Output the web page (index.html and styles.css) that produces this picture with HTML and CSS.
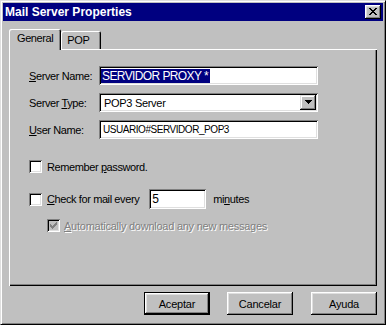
FILE: index.html
```html
<!DOCTYPE html>
<html lang="es">

<head>
    <meta charset="UTF-8">
    <title>Mail Server Properties</title>
    <link rel="stylesheet" href="styles.css">
</head>

<body>
    <div class="window">
        <div class="titlebar">
            <span class="title">Mail Server Properties</span>
            <div class="close">
                <svg width="8" height="7" viewBox="0 0 8 7">
                    <path d="M0 0h2v1h1v1h2v-1h1v-1h2v1h-1v1h-1v1h-1v1h1v1h1v1h1v1h-2v-1h-1v-1h-2v1h-1v1h-2v-1h1v-1h1v-1h1v-1h-1v-1h-1v-1h-1z" fill="#000"/>
                </svg>
            </div>
        </div>

        <div class="content">
            <div class="tabs">
                <div class="tab active">General</div>
                <div class="tab">POP</div>
            </div>

            <div class="panel">
                <div class="field-row">
                    <label><u>S</u>erver Name:</label>
                    <div class="textbox large"><span class="selected">SERVIDOR PROXY *</span></div>
                </div>
                <div class="field-row">
                    <label>Server <u>T</u>ype:</label>
                    <div class="textbox combo">
                        <span>POP3 Server</span>
                        <div class="arrow">
                            <svg width="7" height="4" viewBox="0 0 7 4"><path d="M0 0h7v1h-1v1h-1v1h-1v1h-1v-1h-1v-1h-1v-1h-1z" fill="#000"/></svg>
                        </div>
                    </div>
                </div>
                <div class="field-row">
                    <label><u>U</u>ser Name:</label>
                    <div class="textbox small">USUARIO#SERVIDOR_POP3</div>
                </div>

                <div class="check-row remember">
                    <span class="checkbox"></span>
                    <span>Remember <u>p</u>assword.</span>
                </div>
                <div class="check-row every">
                    <span class="checkbox"></span>
                    <span><u>C</u>heck for mail every</span>
                    <div class="textbox minutes">5</div>
                    <span class="unit">mi<u>n</u>utes</span>
                </div>
                <div class="check-row auto disabled">
                    <span class="checkbox checked">
                        <svg width="7" height="7" viewBox="0 0 7 7"><path d="M6 0h1v3h-1v1h-1v1h-1v1h-1v1h-1v-1h-1v-1h-1v-3h1v1h1v1h1v-1h1v-1h1v-1h1z" fill="#808080"/></svg>
                    </span>
                    <span class="label"><u>A</u>utomatically download any new messages</span>
                </div>
            </div>

            <div class="buttons">
                <button class="default">Aceptar</button>
                <button>Cancelar</button>
                <button>Ayuda</button>
            </div>
        </div>
    </div>
</body>

</html>
```

FILE: styles.css
```css
body {
    margin: 0;
    font-family: 'Liberation Sans', Arial, sans-serif;
    font-size: 11px;
    letter-spacing: -0.4px;
    color: #000;
    background: #c0c0c0;
}

.window {
    width: 386px;
    height: 325px;
    box-sizing: border-box;
    background: #c0c0c0;
    border: 1px solid;
    border-color: #dfdfdf #000 #000 #dfdfdf;
    box-shadow: inset 1px 1px #fff, inset -1px -1px #808080;
    padding: 2px;
}

.titlebar {
    height: 18px;
    background: #000080;
    display: flex;
    align-items: center;
    justify-content: space-between;
    padding: 0 2px 0 2px;

    .title {
        color: #fff;
        font-weight: bold;
        font-size: 12px;
        letter-spacing: 0;
    }
}

.close {
    width: 16px;
    height: 14px;
    box-sizing: border-box;
    background: #c0c0c0;
    box-shadow: inset -1px -1px #000, inset 1px 1px #fff, inset -2px -2px #808080, inset 2px 2px #dfdfdf;
    display: flex;
    justify-content: center;
    align-items: center;
    padding: 0 1px 1px 0;
}

.content {
    padding: 8px 6px 0 6px;
}

.tabs {
    display: flex;
    align-items: flex-end;
    height: 20px;
    position: relative;
    z-index: 1;
}

.tab {
    height: 18px;
    box-sizing: border-box;
    padding: 0 12px 0 6px;
    display: flex;
    align-items: center;
    border-radius: 2px 2px 0 0;
    box-shadow: inset 1px 1px #fff, inset -1px 0 #000, inset -2px 0 #808080;
    background: #c0c0c0;

    &.active {
        height: 21px;
        margin-bottom: -1px;
        padding: 0 8px 3px 8px;
    }
}

.panel {
    height: 237px;
    box-sizing: border-box;
    box-shadow: inset 1px 1px #fff, inset -1px -1px #000, inset -2px -2px #808080;
    padding: 17px 0 0 20px;
}

.field-row {
    display: flex;
    align-items: center;
    height: 19px;
    margin-bottom: 8px;

    label {
        width: 70px;
    }
}

.textbox {
    box-sizing: border-box;
    height: 19px;
    background: #fff;
    box-shadow: inset 1px 1px #808080, inset -1px -1px #fff, inset 2px 2px #000, inset -2px -2px #dfdfdf;
    display: flex;
    align-items: center;
    padding: 0 3px;
    width: 219px;
    letter-spacing: 0;

    &.large {
        font-size: 12px;
        letter-spacing: -0.6px;
        padding-left: 2px;
    }

    &.small {
        font-size: 10px;
        letter-spacing: -0.45px;
        padding-left: 4px;
    }

    &.combo {
        font-size: 11px;
        letter-spacing: -0.3px;
        justify-content: space-between;
        padding: 2px 2px 2px 5px;
    }

    &.minutes {
        width: 57px;
        height: 20px;
        font-size: 12px;
        margin-left: 10px;
    }
}

.selected {
    background: #000080;
    color: #fff;
    line-height: 14px;
    padding: 0 2px 0 1px;
}

.arrow {
    width: 16px;
    height: 15px;
    box-sizing: border-box;
    background: #c0c0c0;
    box-shadow: inset -1px -1px #000, inset 1px 1px #dfdfdf, inset -2px -2px #808080, inset 2px 2px #fff;
    display: flex;
    justify-content: center;
    align-items: center;
    padding-bottom: 1px;
}

.check-row {
    display: flex;
    align-items: center;
    height: 19px;

    &.remember {
        margin-top: 18px;
    }

    &.every {
        margin-top: 13px;
        height: 20px;
    }

    &.auto {
        margin-top: 7px;
        margin-left: 18px;
    }

    .unit {
        margin-left: 7px;
    }
}

.checkbox {
    width: 13px;
    height: 13px;
    box-sizing: border-box;
    background: #fff;
    box-shadow: inset 1px 1px #808080, inset -1px -1px #fff, inset 2px 2px #000, inset -2px -2px #dfdfdf;
    margin-right: 5px;
    display: flex;
    justify-content: center;
    align-items: center;

    &.checked {
        background: #c0c0c0;
        margin-right: 4px;
    }
}

.disabled .label {
    color: #808080;
    letter-spacing: -0.25px;
    text-shadow: 1px 1px #fff;
}

.buttons {
    display: flex;
    justify-content: flex-end;
    gap: 17px;
    margin-top: 6px;

    button {
        width: 66px;
        height: 23px;
        font-family: inherit;
        font-size: 11px;
        letter-spacing: -0.2px;
        background: #c0c0c0;
        border: 0;
        padding: 0;
        box-shadow: inset -1px -1px #000, inset 1px 1px #fff, inset -2px -2px #808080, inset 2px 2px #dfdfdf;

        &.default {
            border: 1px solid #000;
        }
    }

    button + button + button {
        margin-left: 1px;
    }
}
```
